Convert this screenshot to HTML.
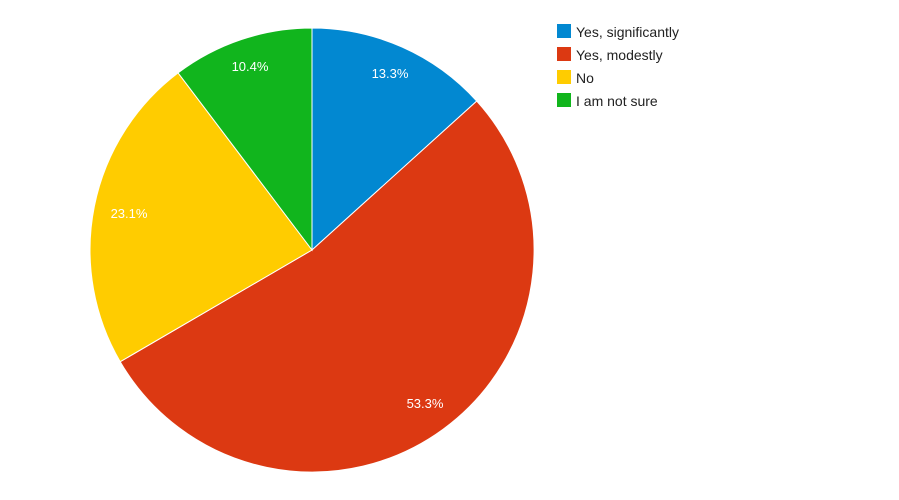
<!DOCTYPE html>
<html><head><style>
body{margin:0;width:899px;height:500px;background:#fff;overflow:hidden;font-family:"Liberation Sans",Arial,sans-serif}
</style></head><body>
<svg width="899" height="500" xmlns="http://www.w3.org/2000/svg" style="display:block">
<g stroke="#fff" stroke-width="1">
<path d="M312,250 L312,28 A222,222 0 0 1 476.7,101.1 Z" fill="#0288d1"/>
<path d="M312,250 L476.7,101.1 A222,222 0 1 1 120.2,361.7 Z" fill="#dc3912"/>
<path d="M312,250 L120.2,361.7 A222,222 0 0 1 178.1,72.9 Z" fill="#ffcc00"/>
<path d="M312,250 L178.1,72.9 A222,222 0 0 1 312,28 Z" fill="#11b51d"/>
</g>
<g font-size="13" fill="#fff" text-anchor="middle" font-family="Liberation Sans,Arial,sans-serif">
<text x="390" y="78">13.3%</text>
<text x="425" y="408">53.3%</text>
<text x="129" y="218">23.1%</text>
<text x="250" y="71">10.4%</text>
</g>
<g font-size="14" fill="#222" font-family="Liberation Sans,Arial,sans-serif">
<rect x="557" y="24" width="14" height="14" fill="#0288d1"/><text x="576" y="37">Yes, significantly</text>
<rect x="557" y="47" width="14" height="14" fill="#dc3912"/><text x="576" y="60">Yes, modestly</text>
<rect x="557" y="70" width="14" height="14" fill="#ffcc00"/><text x="576" y="83">No</text>
<rect x="557" y="93" width="14" height="14" fill="#11b51d"/><text x="576" y="106">I am not sure</text>
</g>
</svg>
</body></html>
